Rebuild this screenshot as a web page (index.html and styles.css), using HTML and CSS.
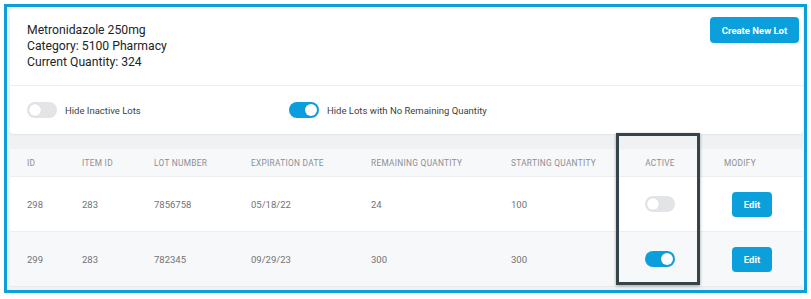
FILE: index.html
```html
<!DOCTYPE html>
<html lang="en">
<head>
    <meta charset="UTF-8">
    <title>Lots</title>
    <link rel="stylesheet" href="styles.css">
</head>
<body>

    <div class="frame">
        <div class="card">
            <div class="item-head">
                <div class="item-info">
                    <div>Metronidazole 250mg</div>
                    <div>Category: 5100 Pharmacy</div>
                    <div>Current Quantity: 324</div>
                </div>
                <button class="btn btn-create">Create New Lot</button>
            </div>
            <div class="filters">
                <label class="filter filter-inactive">
                    <span class="toggle"></span>
                    Hide Inactive Lots
                </label>
                <label class="filter">
                    <span class="toggle on"></span>
                    Hide Lots with No Remaining Quantity
                </label>
            </div>
        </div>

        <div class="lots">
            <div class="row head">
                <div>ID</div>
                <div>Item ID</div>
                <div>Lot Number</div>
                <div>Expiration Date</div>
                <div>Remaining Quantity</div>
                <div>Starting Quantity</div>
                <div class="center">Active</div>
                <div class="modify">Modify</div>
            </div>
            <div class="row">
                <div>298</div>
                <div>283</div>
                <div>7856758</div>
                <div>05/18/22</div>
                <div>24</div>
                <div>100</div>
                <div class="center"><span class="toggle"></span></div>
                <div><button class="btn btn-edit">Edit</button></div>
            </div>
            <div class="row alt">
                <div>299</div>
                <div>283</div>
                <div>782345</div>
                <div>09/29/23</div>
                <div>300</div>
                <div>300</div>
                <div class="center"><span class="toggle on"></span></div>
                <div><button class="btn btn-edit">Edit</button></div>
            </div>
        </div>

        <!-- highlight round the Active column -->
        <div class="highlight"></div>
    </div>

</body>
</html>
```

FILE: styles.css
```css
body {
    margin: 0;
    background: #ffffff;
    font-family: Roboto, "Liberation Sans", sans-serif;
}
.frame {
    position: relative;
    margin: 4px 4px 0 4px;
    width: 803px;
    height: 289px;
    box-sizing: border-box;
    border: 3px solid #0ba0dc;
    background: #eff1f3;
    padding: 1px 1px 0 3px;
    overflow: hidden;
}
.card {
    background: #ffffff;
    border-radius: 4px;
    box-shadow: 0 1px 2px rgba(0, 0, 0, 0.06);
}
.item-head {
    display: flex;
    justify-content: space-between;
    align-items: flex-start;
    padding: 9px 4px 15px 17px;
    border-bottom: 1px solid #eceef0;
}
.item-info {
    padding-top: 5px;
    font-size: 12.2px;
    line-height: 16px;
    color: #222427;
}
.btn {
    border: none;
    border-radius: 4px;
    background: #0ba0dc;
    color: #ffffff;
    font-family: Roboto, "Liberation Sans", sans-serif;
    font-weight: bold;
    font-size: 9.5px;
    cursor: pointer;
}
.btn-create {
    width: 89px;
    height: 26px;
    padding: 0;
}
.filters {
    display: flex;
    align-items: center;
    height: 48px;
    padding-left: 17px;
}
.filter {
    display: flex;
    align-items: center;
    gap: 8px;
    font-size: 9.5px;
    color: #3c3f43;
}
.filter-inactive {
    width: 262px;
}
.toggle {
    display: inline-block;
    position: relative;
    width: 30px;
    height: 16px;
    border-radius: 8px;
    background: #e3e4e7;
}
.toggle::after {
    content: "";
    position: absolute;
    top: 2px;
    left: 2px;
    width: 12px;
    height: 12px;
    border-radius: 50%;
    background: #ffffff;
    box-shadow: 0 0 1px rgba(0, 0, 0, 0.2);
}
.toggle.on {
    background: #0b9edc;
}
.toggle.on::after {
    left: 16px;
}
.lots {
    margin-top: 15px;
    background: #ffffff;
    border-radius: 4px 4px 0 0;
    border-bottom: 1px solid #e8eaec;
}
.row {
    display: grid;
    grid-template-columns: 55px 72px 97px 120px 140px 109px 80px 1fr;
    align-items: center;
    height: 54px;
    padding-left: 17px;
    font-size: 9.5px;
    color: #707377;
    border-top: 1px solid #eceef0;
}
.row.head {
    height: 27px;
    border-top: none;
    background: #f7f8fa;
    font-size: 8.3px;
    letter-spacing: 0.3px;
    text-transform: uppercase;
    color: #8b8e92;
}
.row.alt {
    background: #f7f8fa;
}
.center {
    display: flex;
    justify-content: center;
}
.modify {
    padding-left: 24px;
}
.btn-edit {
    margin-left: 32px;
    width: 40px;
    height: 25px;
    padding: 0;
}
.highlight {
    position: absolute;
    left: 609px;
    top: 126px;
    width: 84px;
    height: 152px;
    box-sizing: border-box;
    border: 3px solid #37434b;
    box-shadow: 0 1px 3px rgba(0, 0, 0, 0.35);
}
```
